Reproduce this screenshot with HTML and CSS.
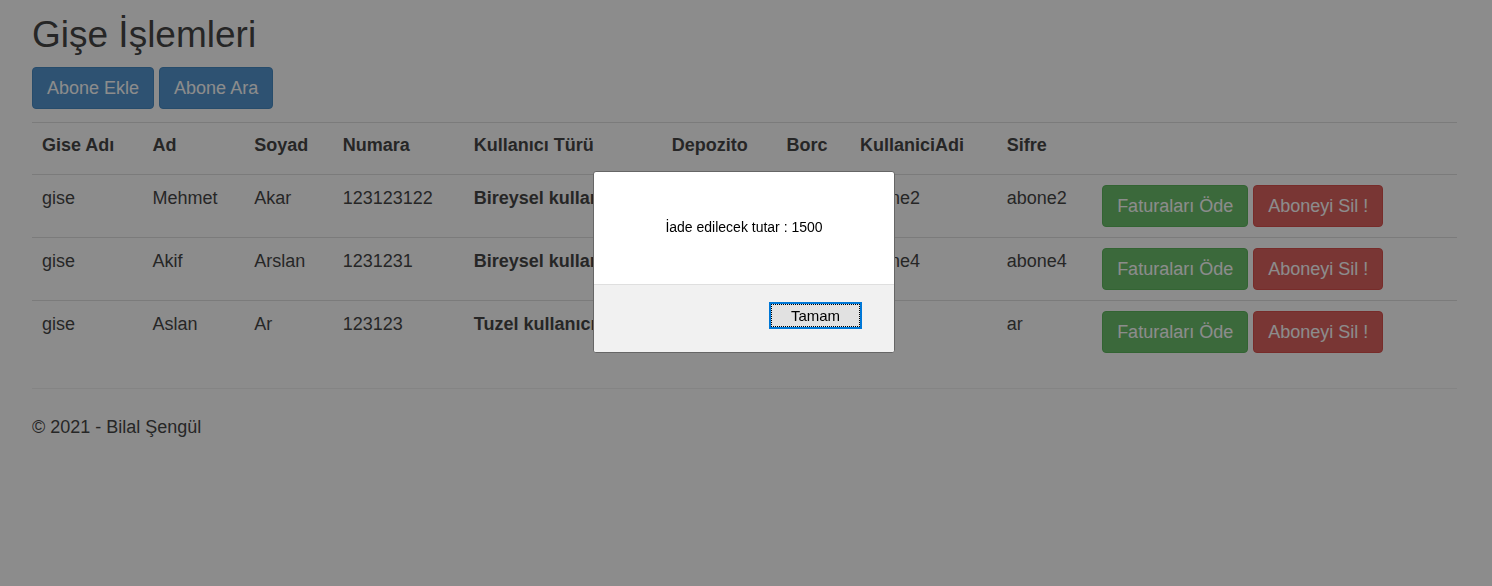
FILE: index.html
```
<!DOCTYPE html>
<html lang="tr">
<head>
<meta charset="utf-8">
<title>Gişe İşlemleri</title>
<link rel="stylesheet" href="styles.css">
</head>
<body>
<div class="container">
  <main>
    <h2 class="title">Gişe İşlemleri</h2>
    <div class="actions">
      <a class="btn btn-primary" href="#">Abone Ekle</a>
      <a class="btn btn-primary" href="#">Abone Ara</a>
    </div>
    <table class="table">
      <colgroup>
        <col class="col-office"><col class="col-name"><col class="col-surname"><col class="col-number"><col class="col-type"><col class="col-deposit"><col class="col-debt"><col class="col-user"><col class="col-password"><col>
      </colgroup>
      <thead>
        <tr><th>Gise Adı</th><th>Ad</th><th>Soyad</th><th>Numara</th><th>Kullanıcı Türü</th><th>Depozito</th><th>Borc</th><th>KullaniciAdi</th><th>Sifre</th><th></th></tr>
      </thead>
      <tbody>
        <tr>
          <td>gise</td><td>Mehmet</td><td>Akar</td><td>123123122</td><td><b>Bireysel kullanıcı</b></td><td></td><td></td><td>abone2</td><td>abone2</td>
          <td><div class="row-actions"><a class="btn btn-success" href="#">Faturaları Öde</a><a class="btn btn-danger" href="#">Aboneyi Sil !</a></div></td>
        </tr>
        <tr>
          <td>gise</td><td>Akif</td><td>Arslan</td><td>1231231</td><td><b>Bireysel kullanıcı</b></td><td></td><td></td><td>abone4</td><td>abone4</td>
          <td><div class="row-actions"><a class="btn btn-success" href="#">Faturaları Öde</a><a class="btn btn-danger" href="#">Aboneyi Sil !</a></div></td>
        </tr>
        <tr>
          <td>gise</td><td>Aslan</td><td>Ar</td><td>123123</td><td><b>Tuzel kullanıcı</b></td><td></td><td></td><td>ar</td><td>ar</td>
          <td><div class="row-actions"><a class="btn btn-success" href="#">Faturaları Öde</a><a class="btn btn-danger" href="#">Aboneyi Sil !</a></div></td>
        </tr>
      </tbody>
    </table>
  </main>
  <footer class="footer">
    <p>© 2021 - Bilal Şengül</p>
  </footer>
</div>
<div class="overlay">
  <div class="dialog" role="alertdialog" aria-modal="true" aria-labelledby="message">
    <p class="dialog-message" id="message">İade edilecek tutar : 1500</p>
    <div class="dialog-footer"><button class="dialog-button" type="button"><span class="dialog-label">Tamam</span></button></div>
  </div>
</div>
</body>
</html>
```

FILE: styles.css
```
* {
  box-sizing: border-box;
}

body {
  margin: 0;
  background: #fff;
  color: #333;
  font-family: "Liberation Sans", Arial, sans-serif;
  font-size: 18px;
  line-height: 27px;
}

.container {
  padding: 14px 35px 0 32px;
}

.title {
  margin: 0 0 12px;
  font-size: 37px;
  font-weight: 400;
  line-height: 41px;
}

.actions,
.row-actions {
  display: flex;
  gap: 5px;
}

.actions {
  margin-bottom: 13px;
}

.btn {
  padding: 8px 14px;
  border: 1px solid;
  border-radius: 4px;
  color: #fff;
  line-height: 24px;
  text-decoration: none;
  white-space: nowrap;
}

.btn-primary {
  background: #428bca;
  border-color: #357ebd;
}

.btn-success {
  background: #5cb85c;
  border-color: #4cae4c;
}

.btn-danger {
  background: #d9534f;
  border-color: #d43f3a;
}

.table {
  width: 100%;
  table-layout: fixed;
  border-spacing: 0;
}

.col-office { width: 7.75%; }
.col-name { width: 7.15%; }
.col-surname { width: 6.2%; }
.col-number { width: 9.2%; }
.col-type { width: 13.9%; }
.col-deposit { width: 8.05%; }
.col-debt { width: 5.15%; }
.col-user { width: 10.3%; }
.col-password { width: 6.7%; }

.table th,
.table td {
  padding: 10px;
  border-top: 1px solid #ddd;
  text-align: left;
  vertical-align: top;
  white-space: nowrap;
}

.table th {
  padding-bottom: 16px;
  line-height: 25px;
}

.footer {
  margin-top: 25px;
  padding-top: 25px;
  border-top: 1px solid #eee;
}

.footer p {
  margin: 0;
}

.overlay {
  position: fixed;
  inset: 0;
  display: flex;
  align-items: flex-start;
  justify-content: center;
  padding: 171px 4px 0 0;
  background: rgba(26, 26, 26, 0.5);
}

.dialog {
  width: 302px;
  border: 1px solid #666;
  border-radius: 3px;
  overflow: hidden;
  background: #fff;
  color: #000;
  font-size: 15px;
}

.dialog-message {
  margin: 0;
  padding: 42px 32px 43px;
  font-size: 14px;
  text-align: center;
}

.dialog-footer {
  display: flex;
  justify-content: flex-end;
  padding: 17px 32px 23px;
  border-top: 1px solid #dfdfdf;
  background: #f1f1f1;
}

.dialog-button {
  width: 93px;
  padding: 0;
  border: 2px solid #0078d7;
  background: #e1e1e1;
  color: #000;
  font-family: inherit;
  font-size: 15px;
  line-height: 21px;
}

.dialog-label {
  display: block;
  border: 1px dotted #000;
}
```
